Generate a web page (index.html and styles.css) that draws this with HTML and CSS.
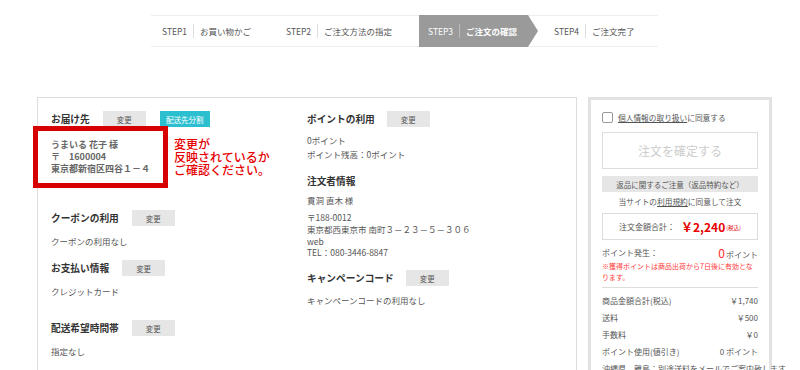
FILE: index.html
```html
<!DOCTYPE html>
<html lang="ja">
<head>
<meta charset="utf-8">
<link rel="stylesheet" href="styles.css">
</head>
<body>
<div class="steps">
  <div class="step s1"><span class="sn">STEP1</span><span class="bar"></span><span>お買い物かご</span></div>
  <div class="step s2"><span class="sn">STEP2</span><span class="bar"></span><span>ご注文方法の指定</span></div>
  <div class="step s3 cur"><span class="sn">STEP3</span><span class="bar"></span><span class="b">ご注文の確認</span></div>
  <div class="step s4"><span class="sn">STEP4</span><span class="bar"></span><span>ご注文完了</span></div>
</div>

<div class="main">
  <div class="content">
    <div class="col left">
      <div class="head"><h3>お届け先</h3><span class="btn">変更</span><span class="btn teal">配送先分割</span></div>
      <div class="addr">
        <p>うまいる 花子 様</p>
        <p>〒　1600004</p>
        <p>東京都新宿区四谷１－４</p>
        <div class="redbox"></div>
        <div class="note"><p>変更が</p><p>反映されているか</p><p>ご確認ください。</p></div>
      </div>
      <div class="head m35"><h3>クーポンの利用</h3><span class="btn">変更</span></div>
      <p class="txt">クーポンの利用なし</p>
      <div class="head m13"><h3>お支払い情報</h3><span class="btn">変更</span></div>
      <p class="txt">クレジットカード</p>
      <div class="head m23"><h3>配送希望時間帯</h3><span class="btn">変更</span></div>
      <p class="txt">指定なし</p>
    </div>
    <div class="col mid">
      <div class="head"><h3>ポイントの利用</h3><span class="btn">変更</span></div>
      <div class="pts"><p>0ポイント</p><p>ポイント残高：0ポイント</p></div>
      <div class="head nb"><h3>注文者情報</h3></div>
      <p class="txt m5">貫洞 直木 様</p>
      <div class="oaddr">
        <p>〒188-0012</p>
        <p>東京都西東京市 南町３－２３－５－３０６</p>
        <p>web</p>
        <p>TEL：080-3446-8847</p>
      </div>
      <div class="head m11"><h3>キャンペーンコード</h3><span class="btn">変更</span></div>
      <p class="txt m8">キャンペーンコードの利用なし</p>
    </div>
  </div>

  <div class="side">
    <div class="agree"><span class="cb"></span><span><u>個人情報の取り扱い</u>に同意する</span></div>
    <div class="confirm">注文を確定する</div>
    <div class="ret">返品に関するご注意（返品特約など）</div>
    <p class="terms">当サイトの<u>利用規約</u>に同意して注文</p>
    <div class="total">注文金額合計： <span class="yen">￥2,240</span><span class="tax">(税込)</span></div>
    <div class="prow pgen"><span>ポイント発生：</span><span><span class="zero">0</span>ポイント</span></div>
    <p class="pnote">※獲得ポイントは商品出荷から7日後に有効となります。</p>
    <div class="sep"></div>
    <div class="rows">
      <div class="prow"><span>商品金額合計(税込)</span><span>￥1,740</span></div>
      <div class="prow"><span>送料</span><span>￥500</span></div>
      <div class="prow"><span>手数料</span><span>￥0</span></div>
      <div class="prow"><span>ポイント使用(値引き)</span><span>0 ポイント</span></div>
      <div class="prow"><span>沖縄県、離島：別途送料をメールでご案内致します。</span></div>
    </div>
  </div>
</div>
</body>
</html>
```

FILE: styles.css
```css
* { box-sizing: border-box; }
html, body { margin: 0; padding: 0; background: #fff; }
body {
  width: 800px;
  height: 370px;
  overflow: hidden;
  font-family: "Noto Sans CJK JP", "Noto Sans", sans-serif;
  color: #555;
  padding-top: 15px;
}
p { margin: 0; }
h3 { margin: 0; }

/* steps */
.steps {
  display: flex;
  margin-left: 151px;
  width: 507px;
  height: 32px;
  border-top: 1px solid #eee;
  border-bottom: 1px solid #eee;
  font-size: 8.5px;
  color: #555;
}
.step {
  display: flex;
  align-items: center;
  position: relative;
}
.step .bar {
  width: 1px;
  height: 14px;
  background: #ddd;
  margin: 0 6px 0 6px;
}
.s1 { width: 126px; padding-left: 11px; }
.s2 { width: 142px; padding-left: 9px; }
.s3 { width: 109px; padding-left: 9px; }
.s4 { width: 130px; padding-left: 26px; }
.cur {
  background: #9a9a9a;
  color: #fff;
  margin: -1px 0;
}
.cur .bar { background: #bbb; }
.cur::after {
  content: "";
  position: absolute;
  right: -10px;
  top: 0;
  border-left: 10px solid #9a9a9a;
  border-top: 16px solid transparent;
  border-bottom: 16px solid transparent;
}
.b { font-weight: bold; }

/* main */
.main {
  display: flex;
  align-items: flex-start;
  margin-top: 50px;
  margin-left: 37px;
  gap: 11px;
}
.content {
  width: 540px;
  height: 300px;
  border: 1px solid #ddd;
  border-bottom: none;
  display: flex;
  padding: 13px 0 0 13px;
}
.col.left { width: 256px; }
.col.mid { width: 260px; }

.head {
  display: flex;
  align-items: center;
  height: 16px;
}
.head h3 {
  font-size: 9.7px;
  font-weight: bold;
  color: #333;
  margin-right: 13px;
}
.btn {
  display: inline-flex;
  align-items: center;
  justify-content: center;
  width: 43px;
  height: 16px;
  background: #e6e6e6;
  font-size: 7.5px;
  color: #555;
}
.btn.teal {
  margin-left: 14px;
  width: 50px;
  background: #2cbfd0;
  color: #fff;
}
.mid .head h3 { margin-right: 12px; }

.addr {
  position: relative;
  margin-top: 12px;
  font-size: 9px;
  font-weight: bold;
  line-height: 12px;
  color: #666;
}
.redbox {
  position: absolute;
  left: -18px;
  top: -13px;
  width: 135px;
  height: 62px;
  border: 5px solid #d60000;
}
.note {
  position: absolute;
  left: 123px;
  top: -2px;
  font-size: 12px;
  line-height: 13px;
  color: #e60000;
  font-weight: 500;
  white-space: nowrap;
}

.txt {
  font-size: 8.5px;
  line-height: 12px;
  margin-top: 9px;
  color: #555;
}
.m35 { margin-top: 35px; }
.m13 { margin-top: 13px; }
.m23 { margin-top: 23px; }
.m11 { margin-top: 11px; }
.txt.m5 { margin-top: 5px; }
.txt.m8 { margin-top: 8px; }

.pts {
  margin-top: 6px;
  font-size: 8.5px;
  line-height: 14px;
}
.head.nb { margin-top: 12px; }
.oaddr {
  margin-top: 6px;
  font-size: 8.5px;
  line-height: 11.75px;
}

/* side */
.side {
  width: 184px;
  height: 290px;
  border: 3px solid #e2e2e2;
  border-bottom: none;
  padding: 12px 11px 0 11px;
  font-size: 7.7px;
  color: #555;
}
.agree {
  display: flex;
  align-items: center;
  height: 11px;
}
.cb {
  width: 11px;
  height: 11px;
  border: 1px solid #999;
  border-radius: 2px;
  margin-right: 5px;
}
.confirm {
  margin-top: 9px;
  height: 37px;
  border: 1px solid #ddd;
  display: flex;
  align-items: center;
  justify-content: center;
  font-size: 12px;
  color: #ccc;
}
.ret {
  margin-top: 7px;
  height: 16px;
  background: #e6e6e6;
  display: flex;
  align-items: center;
  justify-content: center;
  font-size: 7.5px;
}
.terms {
  margin-top: 4px;
  line-height: 12px;
  text-align: center;
}
.total {
  margin-top: 5px;
  height: 27px;
  border: 1px solid #ddd;
  display: flex;
  align-items: center;
  justify-content: center;
  font-size: 8px;
}
.yen {
  color: #e60000;
  font-weight: bold;
  font-size: 12px;
  margin-left: 6px;
}
.tax {
  color: #e60000;
  font-size: 5.5px;
  margin-left: 1px;
  margin-top: 2px;
}
.prow {
  display: flex;
  justify-content: space-between;
  align-items: center;
  height: 17px;
  font-size: 8px;
  white-space: nowrap;
}
.pgen { margin-top: 4px; height: 16px; }
.zero {
  color: #ff2a2a;
  font-size: 12px;
  margin-right: 1px;
}
.pnote {
  margin-top: 1px;
  font-size: 7px;
  line-height: 10.5px;
  color: #ff3b3b;
}
.sep {
  margin-top: 5px;
  height: 1px;
  background: #ddd;
}
.rows { margin-top: 4px; }
```
